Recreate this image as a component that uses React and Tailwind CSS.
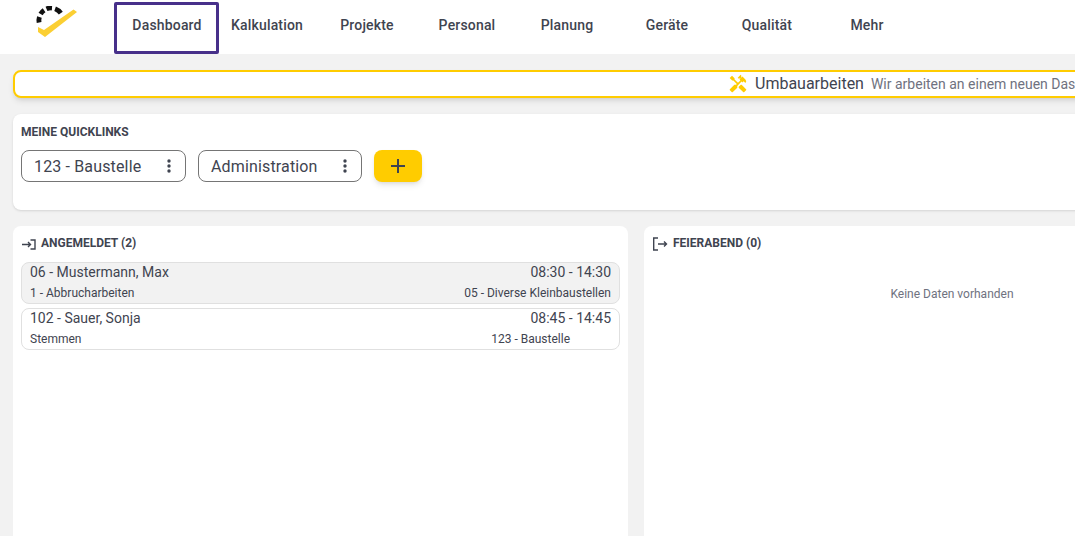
import { MdHandyman } from "react-icons/md";

const navItems = ["Kalkulation", "Projekte", "Personal", "Planung", "Geräte", "Qualität", "Mehr"];

function Logo() {
  return (
    <svg width="42" height="32" viewBox="0 0 42 32" className="shrink-0">
      <g fill="none" stroke="#111" strokeWidth="4.8">
        <path d="M3.1 16.5 A12 12 0 0 1 3.4 11" />
        <path d="M4.6 8 A12 12 0 0 1 8.1 4.2" />
        <path d="M10.5 2.9 A12 12 0 0 1 16 2" />
        <path d="M19.1 2.7 A12 12 0 0 1 24.8 7.1" />
      </g>
      <path d="M2 21 L8 24 L37.5 3.5 L41 6 L9 31 L2 26 Z" fill="#fbcf33" />
    </svg>
  );
}

function DotsIcon() {
  return (
    <svg width="4" height="14" viewBox="0 0 4 14" className="shrink-0" fill="#3f4450">
      <circle cx="2" cy="2" r="1.7" />
      <circle cx="2" cy="7" r="1.7" />
      <circle cx="2" cy="12" r="1.7" />
    </svg>
  );
}

function Quicklink({ label, width }) {
  return (
    <button className={`flex items-center justify-between h-8 pl-3 pr-[14px] rounded-lg border border-[#757575] bg-white text-base tracking-[0.15px] text-[#3f4450] ${width}`}>
      <span className="pt-[2px]">{label}</span>
      <DotsIcon />
    </button>
  );
}

function EntryRow({ name, time, task, site, active, siteClass }) {
  return (
    <div className={`h-[42px] rounded-lg border border-[#e0e0e0] px-2 ${active ? "bg-[#f2f2f2]" : "bg-white"}`}>
      <div className="flex justify-between text-sm leading-[18px] text-[#3f4450]">
        <span>{name}</span>
        <span>{time}</span>
      </div>
      <div className="flex justify-between text-xs leading-[18px] mt-[3px] text-[#3f4450]">
        <span>{task}</span>
        <span className={siteClass}>{site}</span>
      </div>
    </div>
  );
}

export default function App() {
  return (
    <div className="w-[1075px] h-[536px] overflow-hidden bg-[#f2f2f2] font-['Roboto',sans-serif]">
      <div className="w-[1260px]">
        {/* Header */}
        <header className="h-[54px] bg-white flex">
          <div className="w-[114px] pl-9 pt-[6px]">
            <Logo />
          </div>
          <a className="w-[105px] mt-[2px] h-[52px] flex items-center justify-center rounded-[2px] border-[3px] border-[#47308a] text-sm font-medium tracking-[0.175px] text-[#3f4450] pb-[6px] pl-[1px]">
            Dashboard
          </a>
          {navItems.map((item) => (
            <a key={item} className="w-[100px] -ml-[2px] mr-[2px] h-[50px] flex items-center justify-center text-sm font-medium tracking-[0.175px] text-[#3f4450]">
              {item}
            </a>
          ))}
        </header>

        <main className="pl-[13px] pr-[1px]">
          {/* Banner */}
          <div className="mt-4 h-7 rounded-lg border-2 border-[#ffcc00] bg-white shadow-md flex items-center pl-[713px] whitespace-nowrap">
            <MdHandyman className="text-[#ffcc00] text-xl shrink-0" />
            <span className="ml-[7px] text-base text-[#3f4450]">Umbauarbeiten</span>
            <span className="ml-[7px] text-sm text-[#6f7280]">Wir arbeiten an einem neuen Dashboard</span>
          </div>

          {/* Quicklinks */}
          <section className="mt-4 h-24 rounded-lg bg-white shadow-sm pl-2 pt-[10px]">
            <h2 className="text-xs leading-[16px] font-bold text-[#3f4450] uppercase">Meine Quicklinks</h2>
            <div className="flex mt-[10px]">
              <Quicklink label="123 - Baustelle" width="w-[165px]" />
              <div className="w-3" />
              <Quicklink label="Administration" width="w-[164px]" />
              <button className="ml-3 w-12 h-8 rounded-lg bg-[#ffcc00] shadow-md flex items-center justify-center">
                <svg width="16" height="16" viewBox="0 0 16 16" stroke="#3f4450" strokeWidth="2">
                  <path d="M8 1v14M1 8h14" />
                </svg>
              </button>
            </div>
          </section>

          {/* Columns */}
          <div className="mt-4 grid grid-cols-2 gap-4">
            <section className="h-[400px] rounded-lg bg-white pt-[9px] px-2">
              <h2 className="flex items-center text-xs leading-[16px] font-bold text-[#3f4450]">
                <svg width="16" height="16" viewBox="0 0 16 16" fill="none" stroke="#3f4450" strokeWidth="1.4" className="mr-[4px]">
                  <path d="M1 9.5h8.5M7 7l2.5 2.5L7 12M9.5 5h4.5v9H9.5" />
                </svg>
                ANGEMELDET (2)
              </h2>
              <div className="mt-[11px] flex flex-col gap-1">
                <EntryRow active name="06 - Mustermann, Max" time="08:30 - 14:30" task="1 - Abbrucharbeiten" site="05 - Diverse Kleinbaustellen" />
                <EntryRow name="102 - Sauer, Sonja" time="08:45 - 14:45" task="Stemmen" site="123 - Baustelle" siteClass="mr-[41px]" />
              </div>
            </section>
            <section className="h-[400px] rounded-lg bg-white pt-[9px] px-2">
              <h2 className="flex items-center text-xs leading-[16px] font-bold text-[#3f4450]">
                <svg width="16" height="16" viewBox="0 0 16 16" fill="none" stroke="#3f4450" strokeWidth="1.4" className="mr-[5px]">
                  <path d="M6 3H1.7v12H6M6 9h8.5M12 6.5 14.5 9 12 11.5" />
                </svg>
                FEIERABEND (0)
              </h2>
              <p className="mt-[35px] pl-[1px] text-center text-xs leading-[16px] text-[#6f7280]">Keine Daten vorhanden</p>
            </section>
          </div>
        </main>
      </div>
    </div>
  );
}
